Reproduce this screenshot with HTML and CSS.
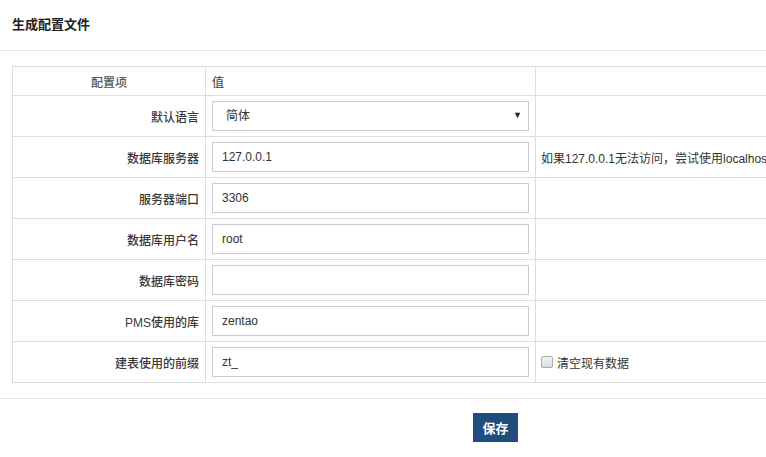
FILE: index.html
```html
<!DOCTYPE html>
<html lang="zh-CN">
<head>
<meta charset="utf-8">
<title>生成配置文件</title>
<link rel="stylesheet" href="styles.css">
</head>
<body>
<div class="page">
  <div class="panel-heading"><strong>生成配置文件</strong></div>
  <div class="panel-body">
    <table class="form-table">
      <colgroup><col class="c1"><col class="c2"><col></colgroup>
      <thead>
        <tr><th class="head-label">配置项</th><th class="head-value">值</th><th></th></tr>
      </thead>
      <tbody>
        <tr>
          <th>默认语言</th>
          <td><div class="select-wrap"><select class="control select"><option>简体</option></select><span class="caret">▼</span></div></td>
          <td></td>
        </tr>
        <tr>
          <th>数据库服务器</th>
          <td><input class="control" type="text" value="127.0.0.1"></td>
          <td class="hint">如果127.0.0.1无法访问，尝试使用localhost</td>
        </tr>
        <tr>
          <th>服务器端口</th>
          <td><input class="control" type="text" value="3306"></td>
          <td></td>
        </tr>
        <tr>
          <th>数据库用户名</th>
          <td><input class="control" type="text" value="root"></td>
          <td></td>
        </tr>
        <tr>
          <th>数据库密码</th>
          <td><input class="control" type="text" value=""></td>
          <td></td>
        </tr>
        <tr>
          <th>PMS使用的库</th>
          <td><input class="control" type="text" value="zentao"></td>
          <td></td>
        </tr>
        <tr>
          <th>建表使用的前缀</th>
          <td><input class="control" type="text" value="zt_"></td>
          <td class="hint"><label class="check"><span class="box"></span>清空现有数据</label></td>
        </tr>
      </tbody>
    </table>
  </div>
  <div class="panel-footer">
    <button class="btn-primary" type="button">保存</button>
  </div>
</div>
</body>
</html>
```
FILE: styles.css
```css
html, body {
  margin: 0;
  padding: 0;
  overflow: hidden;
  background: #fff;
}
body {
  font-family: "Liberation Sans", "Noto Sans CJK SC", sans-serif;
  font-size: 12px;
  color: #333;
}
.page {
  width: 991px;
}
.panel-heading {
  height: 51px;
  box-sizing: border-box;
  padding: 16px 12px 0;
  border-bottom: 1px solid #e5e5e5;
  font-size: 13px;
  line-height: 17px;
  color: #222;
}
.panel-body {
  padding: 15px 12px 15px;
}
.form-table {
  width: 100%;
  border-collapse: collapse;
  table-layout: fixed;
}
.form-table col.c1 { width: 193px; }
.form-table col.c2 { width: 330px; }
.form-table th,
.form-table td {
  border: 1px solid #ddd;
  padding: 5px 6px;
  vertical-align: middle;
}
.form-table thead th {
  height: 29px;
  box-sizing: border-box;
  padding: 0 6px;
  font-weight: 500;
  color: #555;
}
.form-table thead .head-label { text-align: center; }
.form-table thead .head-value { text-align: left; }
.form-table tbody th {
  height: 40px;
  box-sizing: border-box;
  text-align: right;
  font-weight: 500;
  color: #3a3a3a;
}
.form-table td.hint {
  padding-left: 5px;
  white-space: nowrap;
  overflow: hidden;
  color: #333;
}
.control {
  display: block;
  width: 100%;
  height: 30px;
  box-sizing: border-box;
  border: 1px solid #ccc;
  padding: 0 9px;
  font-family: "Liberation Sans", "Noto Sans CJK SC", sans-serif;
  font-size: 12px;
  color: #333;
  background: #fff;
  border-radius: 0;
  outline: none;
}
.select-wrap {
  position: relative;
}
.select {
  appearance: none;
  -webkit-appearance: none;
  padding-left: 13px;
}
.caret {
  position: absolute;
  right: 7px;
  top: 8px;
  font-size: 9px;
  line-height: 12px;
  color: #222;
  pointer-events: none;
}
.check {
  display: flex;
  align-items: center;
  gap: 4px;
}
.box {
  width: 10px;
  height: 10px;
  border: 1px solid #aaa;
  background: linear-gradient(#f4f4f4, #dcdcdc);
  border-radius: 2px;
}
.panel-footer {
  border-top: 1px solid #e5e5e5;
  padding-top: 14px;
  display: flex;
  justify-content: center;
}
.btn-primary {
  width: 45px;
  height: 29px;
  border: none;
  background: #1f4e7c;
  color: #fff;
  font-family: "Liberation Sans", "Noto Sans CJK SC", sans-serif;
  font-size: 13px;
  font-weight: bold;
  padding: 0;
}
```
